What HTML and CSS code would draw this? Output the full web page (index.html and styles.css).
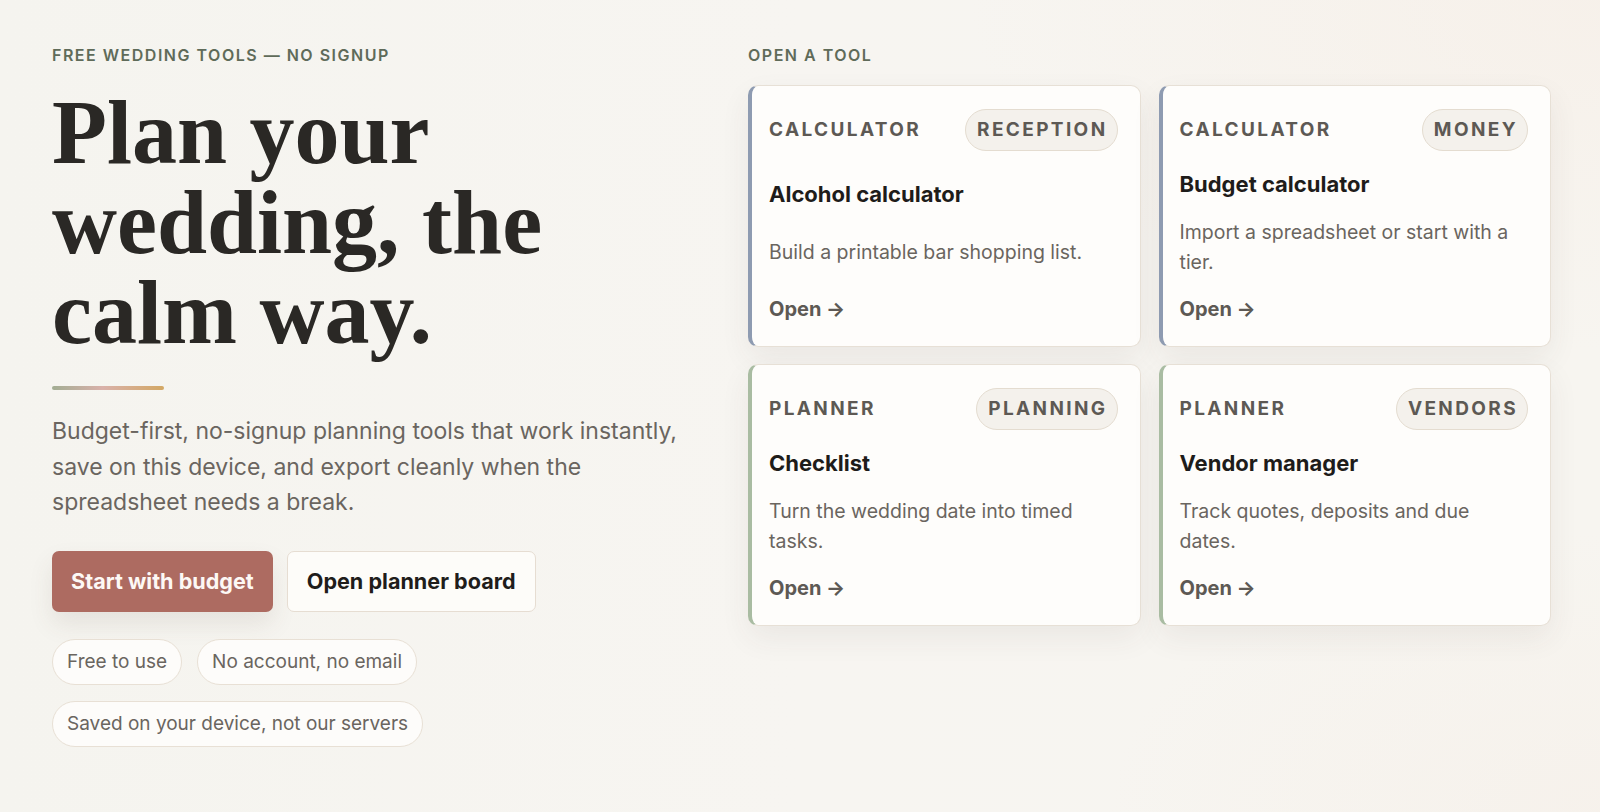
FILE: index.html
```html
<!DOCTYPE html>
<html lang="en">
<head>
<meta charset="utf-8">
<title>Wedding planning tools</title>
<link rel="stylesheet" href="styles.css">
</head>
<body>
<main class="hero">
  <section class="intro">
    <p class="eyebrow">Free wedding tools — no signup</p>
    <h1 class="headline">Plan your wedding, the calm way.</h1>
    <div class="rule"></div>
    <p class="lede">Budget-first, no-signup planning tools that work instantly, save on this device, and export cleanly when the spreadsheet needs a break.</p>
    <div class="actions">
      <a class="btn btn-primary" href="#">Start with budget</a>
      <a class="btn btn-secondary" href="#">Open planner board</a>
    </div>
    <ul class="perks">
      <li class="perk">Free to use</li>
      <li class="perk">No account, no email</li>
      <li class="perk">Saved on your device, not our servers</li>
    </ul>
  </section>

  <section class="tools">
    <p class="eyebrow">Open a tool</p>
    <div class="tool-grid">
      <a class="tool tool-calc" href="#">
        <div class="tool-head"><span class="tool-kind">Calculator</span><span class="tool-tag">Reception</span></div>
        <h2 class="tool-title">Alcohol calculator</h2>
        <p class="tool-desc">Build a printable bar shopping list.</p>
        <span class="tool-open">Open →</span>
      </a>
      <a class="tool tool-calc" href="#">
        <div class="tool-head"><span class="tool-kind">Calculator</span><span class="tool-tag">Money</span></div>
        <h2 class="tool-title">Budget calculator</h2>
        <p class="tool-desc">Import a spreadsheet or start with a tier.</p>
        <span class="tool-open">Open →</span>
      </a>
      <a class="tool tool-plan" href="#">
        <div class="tool-head"><span class="tool-kind">Planner</span><span class="tool-tag">Planning</span></div>
        <h2 class="tool-title">Checklist</h2>
        <p class="tool-desc">Turn the wedding date into timed tasks.</p>
        <span class="tool-open">Open →</span>
      </a>
      <a class="tool tool-plan" href="#">
        <div class="tool-head"><span class="tool-kind">Planner</span><span class="tool-tag">Vendors</span></div>
        <h2 class="tool-title">Vendor manager</h2>
        <p class="tool-desc">Track quotes, deposits and due dates.</p>
        <span class="tool-open">Open →</span>
      </a>
    </div>
  </section>
</main>
</body>
</html>
```

FILE: styles.css
```css
* { box-sizing: border-box; }

html, body { height: 100%; }

body {
  margin: 0;
  font-family: Inter, "Noto Sans", sans-serif;
  color: #2a2825;
  background:
    radial-gradient(ellipse 900px 500px at 100% 0%, rgba(246, 236, 228, 0.5), transparent 70%),
    radial-gradient(ellipse 700px 400px at 100% 100%, rgba(245, 237, 230, 0.45), transparent 70%),
    linear-gradient(90deg, #f5f4ef 0%, #f7f5f1 50%, #f7f5f0 100%);
}

.hero {
  display: grid;
  grid-template-columns: 640px 1fr;
  column-gap: 56px;
  padding: 45px 49px 0 52px;
}

.eyebrow {
  margin: 0;
  font-size: 16px;
  line-height: 20px;
  font-weight: 600;
  letter-spacing: 0.094em;
  text-transform: uppercase;
  color: #5f6b59;
}

/* left column */
.headline {
  margin: 23px 0 0;
  font-family: "Liberation Serif", "Times New Roman", serif;
  font-weight: 700;
  font-size: 90px;
  line-height: 90px;
  color: #2a2825;
  max-width: 560px;
}

.rule {
  width: 112px;
  height: 4px;
  margin-top: 28px;
  border-radius: 2px;
  background: linear-gradient(90deg, #a2ad93 0%, #d9b1aa 45%, #d3a864 100%);
}

.lede {
  margin: 24px 0 0;
  font-size: 23px;
  line-height: 35.5px;
  color: #6a655f;
}

.actions {
  display: flex;
  gap: 14px;
  margin-top: 30px;
}

.btn {
  display: inline-flex;
  align-items: center;
  height: 61px;
  padding: 0 19px;
  border-radius: 7px;
  font-size: 21.6px;
  font-weight: 700;
  text-decoration: none;
}

.btn-primary {
  background: #ad6b61;
  color: #fdf8f5;
  box-shadow: 0 12px 24px rgba(90, 70, 60, 0.10);
}

.btn-secondary {
  background: #fdfcf9;
  color: #1f1d1b;
  border: 1px solid #e6ddd2;
}

.perks {
  list-style: none;
  margin: 27px 0 0;
  padding: 0;
  display: flex;
  flex-wrap: wrap;
  gap: 16px 15px;
  max-width: 440px;
}

.perk {
  height: 46px;
  display: inline-flex;
  align-items: center;
  padding: 0 14px;
  border-radius: 999px;
  border: 1px solid #e8e0d5;
  background: #fdfcfa;
  font-size: 19px;
  color: #6a655f;
}

/* right column */
.tool-grid {
  display: grid;
  grid-template-columns: 1fr 1fr;
  gap: 17px 18px;
  margin-top: 20px;
}

.tool {
  display: flex;
  flex-direction: column;
  justify-content: space-between;
  gap: 20px;
  padding: 23px 22px 25px 17px;
  border: 1px solid #e7e0d6;
  border-radius: 10px;
  background: #fefdfb;
  box-shadow: 0 12px 30px rgba(70, 60, 50, 0.07);
  text-decoration: none;
  color: inherit;
}

.tool-calc { border-left: 4px solid #8e9bb1; }
.tool-plan { border-left: 4px solid #a9bca2; }

.tool-head {
  display: flex;
  justify-content: space-between;
  align-items: center;
}

.tool-kind,
.tool-tag {
  font-size: 19px;
  line-height: 20px;
  font-weight: 700;
  letter-spacing: 0.125em;
  text-transform: uppercase;
  color: #5d5954;
}

.tool-tag {
  padding: 10px 9px 10px 11px;
  border: 1px solid #e4dcd0;
  border-radius: 999px;
  background: #f4f1ec;
}

.tool-title {
  margin: 0;
  font-size: 22px;
  line-height: 26px;
  font-weight: 700;
  color: #1e1c1a;
}

.tool-desc {
  margin: 0;
  font-size: 19.5px;
  line-height: 30px;
  color: #6a655f;
}

.tool-open {
  font-size: 20px;
  line-height: 24px;
  font-weight: 700;
  color: #5d5954;
}
```
